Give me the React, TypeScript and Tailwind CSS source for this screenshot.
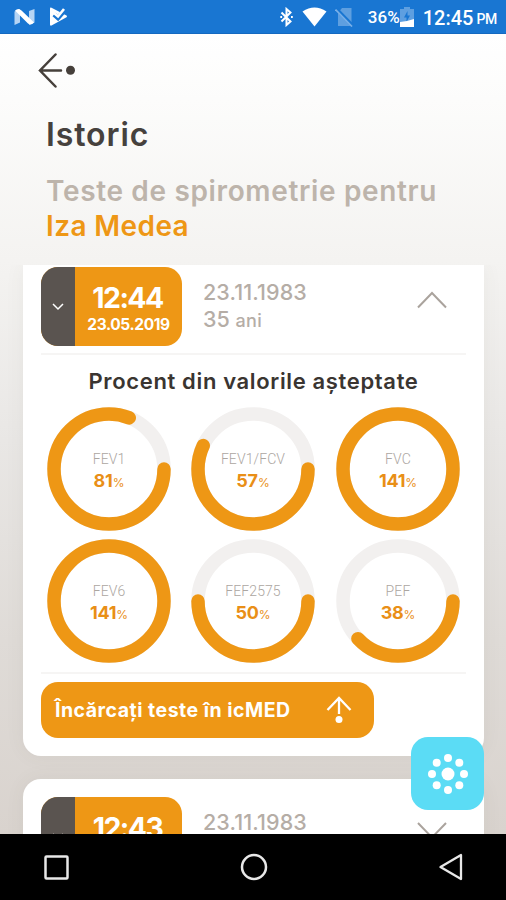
import React from 'react';

interface Measurement {
  label: string;
  value: number;
}

interface TestHeaderProps {
  time: string;
  date: string;
  birthDate: string;
  age: number;
  open?: boolean;
}

const measurements: Measurement[] = [
  { label: 'FEV1', value: 81 },
  { label: 'FEV1/FCV', value: 57 },
  { label: 'FVC', value: 141 },
  { label: 'FEV6', value: 141 },
  { label: 'FEF2575', value: 50 },
  { label: 'PEF', value: 38 },
];

const StatusBar: React.FC = () => (
  <div className="h-[34px] shrink-0 bg-[#1976d2] border-b border-[#1569c0] flex items-center pl-[14px] pr-[9px] text-white font-['Roboto',sans-serif]">
    <svg className="w-[21px] h-[18px]" viewBox="0 0 21 18">
      <path d="M.500 3.500L6 1v13.500L.500 17zM15 3l5.500-2v13.500L15 17z" fill="#b5d4f4" />
      <path d="M1 2.500Q4.500-.500 7.500 2.500L20 14.500Q17 18 14 15.500z" fill="#fff" />
    </svg>
    <svg className="ml-[14px] w-[19px] h-[19px]" viewBox="0 0 19 19">
      <path d="M1 1.500Q1 0 2.500.7L17.500 8.500q1.200.8 0 1.700L2.500 18.500Q1 19 1 17.500z" fill="#fff" />
      <path d="M5 7.500l4 3.500 7-8" fill="none" stroke="#1976d2" strokeWidth="4.500" />
      <path d="M5 6l4 3.500 6-7.500" fill="none" stroke="#fff" strokeWidth="2.600" />
    </svg>
    <div className="ml-auto flex items-center">
      <svg className="w-[13px] h-[20px]" viewBox="0 0 13 20" fill="none" stroke="#fff" strokeWidth="2">
        <path d="M1.500 5.500l9 9-4 3.500V2l4 3.500-9 9" />
        <path d="M.300 10h1.800M11 10h1.800" />
      </svg>
      <svg className="ml-[9px] w-[25px] h-[20px]" viewBox="0 0 25 20">
        <path d="M.500 4.500Q12.500-3.500 24.500 4.500L12.500 19.500z" fill="#fff" />
      </svg>
      <svg className="ml-[8px] w-[19px] h-[20px]" viewBox="0 0 19 20">
        <path d="M7 1h9.500v18H3V6z" fill="#5e9fe0" />
        <path d="M1 1.500l16.500 17" stroke="#1976d2" strokeWidth="3.500" />
        <path d="M.500 2.500l16.500 17" stroke="#79b0e8" strokeWidth="1.700" />
      </svg>
      <span className="ml-[14px] mt-[2px] text-[17px] leading-none font-medium">36%</span>
      <svg className="w-[14px] h-[20px]" viewBox="0 0 14 20">
        <path d="M4 0h6v2h4v18H0V2h4z" fill="#5e9fe0" />
        <path d="M7.500 4L4 10.500h2.500V15l3.500-6.500H7.500z" fill="#1976d2" />
        <path d="M0 15l7-1 7-2v8H0z" fill="#fff" />
      </svg>
      <span className="ml-[9px] mt-[2px] text-[20px] leading-none font-medium">12:45</span>
      <span className="ml-[3px] mt-[5px] text-[14px] leading-none font-medium tracking-[-0.3px]">PM</span>
    </div>
  </div>
);

const ProgressRing: React.FC<Measurement> = ({ label, value }) => {
  const portion = Math.min(value, 100);

  return (
    <div className="grid w-[124px] h-[124px] place-items-center">
      <svg className="col-start-1 row-start-1 w-[124px] h-[124px]" viewBox="0 0 124 124" fill="none">
        <circle cx="62" cy="62" r="55" stroke="#f2f0ef" strokeWidth="13.500" />
        <circle
          cx="62"
          cy="62"
          r="55"
          stroke="#ee9715"
          strokeWidth="13.500"
          strokeLinecap="round"
          pathLength={100}
          strokeDasharray={portion === 100 ? undefined : `${portion} 100`}
        />
      </svg>
      <div className="col-start-1 row-start-1 flex flex-col items-center pt-[4px]">
        <span className="text-[14px] leading-[20px] text-[#aca6a1] font-['Roboto',sans-serif] font-light tracking-[0.1px]">{label}</span>
        <span className="mt-[1px] flex items-baseline text-[#e98f17] leading-[22px]">
          <span className="text-[18px] font-bold tracking-[-0.2px]">{value}</span>
          <span className="text-[12px] font-normal">%</span>
        </span>
      </div>
    </div>
  );
};

const TestHeader: React.FC<TestHeaderProps> = ({ time, date, birthDate, age, open }) => (
  <div className="flex h-[79px]">
    <div className="flex w-[141px] shrink-0 overflow-hidden rounded-[17px] bg-[#ee9715]">
      <div className="flex w-[34px] items-center justify-center bg-[#5a5450]">
        <svg className="w-3 h-2" viewBox="0 0 12 8" fill="none" stroke="#fff" strokeWidth="1.500">
          <path d="M1 1l5 5 5-5" />
        </svg>
      </div>
      <div className="flex flex-1 flex-col items-center pt-[15px] text-white">
        <span className="-ml-[2px] text-[28.500px] leading-[32px] font-bold tracking-[-1.600px]">{time}</span>
        <span className="text-[15.500px] leading-[22px] font-bold tracking-[-0.4px]">{date}</span>
      </div>
    </div>
    <div className="ml-[21px] pt-[12px] text-[#b5ada6] font-medium">
      <p className="text-[21.500px] leading-[27px] tracking-[0.1px]">{birthDate}</p>
      <p className="text-[21.500px] leading-[27px]">{age} <span className="text-[18px] tracking-[0.3px]">ani</span></p>
    </div>
    <svg className="ml-auto mr-[37px] mt-[24px] w-[30px] h-[18px]" viewBox="0 0 30 18" fill="none" stroke="#aaa39d" strokeWidth="2">
      <path d={open ? 'M1 16.500L15 2l14 14.500' : 'M1 2l14 14.500L29 2'} />
    </svg>
  </div>
);

const NavigationBar: React.FC = () => (
  <div className="flex h-[66px] shrink-0 items-center justify-between bg-black pl-[44px] pr-[42px]">
    <svg className="w-[25px] h-[25px]" viewBox="0 0 25 25" fill="none" stroke="#e8e8e8" strokeWidth="2.500">
      <rect x="1.500" y="1.500" width="22" height="22" rx="1" />
    </svg>
    <svg className="w-[28px] h-[28px]" viewBox="0 0 28 28" fill="none" stroke="#e8e8e8" strokeWidth="2.500">
      <circle cx="14" cy="14" r="12" />
    </svg>
    <svg className="w-[26px] h-[28px]" viewBox="0 0 26 28" fill="none" stroke="#e8e8e8" strokeWidth="2.300" strokeLinejoin="round">
      <path d="M2.500 14L23 2v24z" />
    </svg>
  </div>
);

const App: React.FC = () => {
  return (
    <div className="relative flex h-[900px] w-[506px] flex-col overflow-hidden bg-[linear-gradient(180deg,#ffffff_34px,#fcfcfb_100px,#f4f3f1_260px,#e9e7e5_440px,#dfdbd7_640px,#d9d3ce_834px)] font-['Inter',sans-serif]">
      <StatusBar />

      <header className="h-[231px] shrink-0 pl-[46px] pt-[18px]">
        <svg className="-ml-[8px] w-[38px] h-[36px]" viewBox="0 0 38 36" fill="none" stroke="#46403b" strokeWidth="2.500" strokeLinecap="round">
          <path d="M17.500 2.500L2 18.500l15.500 16M2 18.500h21" />
          <circle cx="32.500" cy="18.300" r="4.500" fill="#46403b" stroke="none" />
        </svg>
        <h1 className="mt-[27px] text-[32px] leading-[40px] font-semibold tracking-[0.9px] text-[#46413d]">Istoric</h1>
        <h2 className="mt-[19px] text-[28px] leading-[35px] font-semibold tracking-[0.65px] text-[#bdb4ab] whitespace-nowrap">
          Teste de spirometrie pentru
          <br />
          <span className="tracking-[0.4px] text-[#ee9715]">Iza Medea</span>
        </h2>
      </header>

      <main className="flex-1 overflow-hidden pl-[23px] pr-[22px]">
        <section className="h-[491px] rounded-b-[18px] bg-white pl-[18px] pt-[2px] shadow-[0_0_20px_rgba(90,80,70,0.06)]">
          <TestHeader time="12:44" date="23.05.2019" birthDate="23.11.1983" age={35} open />
          <div className="mt-[7px] mr-[18px] h-[2px] bg-[#f6f5f4]" />
          <h3 className="mt-[13px] mr-[18px] text-center text-[22px] leading-[26px] font-semibold tracking-[0.65px] text-[#3a3531]">
            Procent din valorile așteptate
          </h3>
          <div className="mt-[13px] ml-[6px] grid grid-cols-[144px_145px_124px] gap-y-2">
            {measurements.map((item) => (
              <ProgressRing key={item.label} {...item} />
            ))}
          </div>
          <div className="mt-[9px] mr-[18px] h-[2px] bg-[#f6f5f4]" />
          <button className="mt-[8px] flex h-[56px] w-[333px] items-center justify-between rounded-[17px] bg-[#ee9715] pl-[14px] pr-[22px] text-white">
            <span className="pt-[2px] text-[19.500px] font-bold tracking-[0.5px] whitespace-nowrap">Încărcați teste în icMED</span>
            <svg className="w-[26px] h-[28px]" viewBox="0 0 26 28" fill="none" stroke="#fff" strokeWidth="2.300">
              <path d="M1.500 14L13 2l11.500 12M13 2v16" />
              <circle cx="13" cy="23.500" r="3.500" fill="#fff" stroke="none" />
            </svg>
          </button>
        </section>

        <section className="mt-[23px] h-[200px] rounded-t-[18px] bg-white pl-[18px] pt-[18px] shadow-[0_0_20px_rgba(90,80,70,0.06)]">
          <TestHeader time="12:43" date="23.05.2019" birthDate="23.11.1983" age={35} />
        </section>
      </main>

      {/* floating menu button */}
      <button className="absolute left-[411px] top-[737px] flex h-[73px] w-[73px] items-center justify-center rounded-[17px] bg-[#5bdcf5]">
        <svg className="w-[40px] h-[40px]" viewBox="0 0 40 40" fill="#fff">
          <circle cx="20" cy="20" r="6.500" />
          <circle cx="20" cy="4" r="4" />
          <circle cx="31.300" cy="8.700" r="4" />
          <circle cx="36" cy="20" r="4" />
          <circle cx="31.300" cy="31.300" r="4" />
          <circle cx="20" cy="36" r="4" />
          <circle cx="8.700" cy="31.300" r="4" />
          <circle cx="4" cy="20" r="4" />
          <circle cx="8.700" cy="8.700" r="4" />
        </svg>
      </button>

      <NavigationBar />
    </div>
  );
};

export default App;
